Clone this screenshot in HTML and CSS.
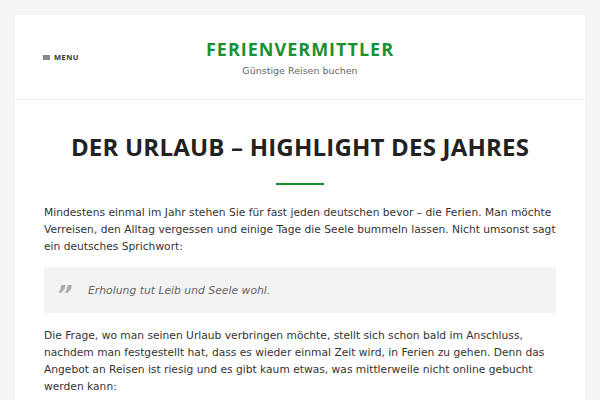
FILE: index.html
```html
<!DOCTYPE html>
<html lang="de">
<head>
<meta charset="utf-8">
<link rel="stylesheet" href="styles.css">
</head>
<body>
<div class="page">
  <header class="site-header">
    <div class="menu-toggle"><span class="burger"></span><span class="menu-label">MENU</span></div>
    <div class="branding">
      <div class="site-title">FERIENVERMITTLER</div>
      <div class="tagline">Günstige Reisen buchen</div>
    </div>
  </header>
  <main class="content">
    <h1 class="entry-title">DER URLAUB – HIGHLIGHT DES JAHRES</h1>
    <div class="title-rule"></div>
    <p>Mindestens einmal im Jahr stehen Sie für fast jeden deutschen bevor – die Ferien. Man möchte<br>Verreisen, den Alltag vergessen und einige Tage die Seele bummeln lassen. Nicht umsonst sagt<br>ein deutsches Sprichwort:</p>
    <blockquote class="quote"><span class="qmark">”</span><span class="qtext">Erholung tut Leib und Seele wohl.</span></blockquote>
    <p>Die Frage, wo man seinen Urlaub verbringen möchte, stellt sich schon bald im Anschluss,<br>nachdem man festgestellt hat, dass es wieder einmal Zeit wird, in Ferien zu gehen. Denn das<br>Angebot an Reisen ist riesig und es gibt kaum etwas, was mittlerweile nicht online gebucht<br>werden kann:</p>
  </main>
</div>
</body>
</html>
```

FILE: styles.css
```css
html, body {
  margin: 0;
  padding: 0;
  background: #f5f5f5;
  font-family: "DejaVu Sans", Verdana, sans-serif;
  color: #333;
}
.page {
  margin: 15px 15px 0 15px;
  background: #fff;
  height: 385px;
  overflow: hidden;
}
.site-header {
  position: relative;
  height: 84px;
  border-bottom: 1px solid #f0f0f0;
  display: flex;
  justify-content: center;
  align-items: center;
}
.menu-toggle {
  position: absolute;
  left: 28px;
  top: 37px;
  display: flex;
  align-items: center;
  gap: 4px;
}
.burger {
  display: block;
  width: 7px;
  height: 5px;
  background: #888;
}
.menu-label {
  font-family: "Open Sans", sans-serif;
  font-size: 7.5px;
  font-weight: bold;
  letter-spacing: 0.5px;
  color: #333;
}
.branding {
  text-align: center;
}
.site-title {
  font-family: "Open Sans", sans-serif;
  font-size: 18px;
  font-weight: bold;
  color: #1a9130;
  letter-spacing: 1px;
  line-height: 20px;
}
.tagline {
  font-size: 9.5px;
  color: #666;
  margin-top: 6px;
}
.content {
  padding: 0 29px;
}
.entry-title {
  font-family: "Open Sans", sans-serif;
  margin: 32px 0 0 0;
  text-align: center;
  font-size: 24px;
  font-weight: bold;
  letter-spacing: 0.2px;
  color: #222;
  line-height: 30px;
}
.title-rule {
  width: 48px;
  height: 2px;
  background: #1a9130;
  margin: 21px auto 0 auto;
}
.content p {
  font-size: 10.7px;
  line-height: 17px;
  margin: 19px -8px 0 0;
}
.quote {
  margin: 12px 0 0 0;
  background: #f3f3f3;
  height: 46px;
  display: flex;
  align-items: center;
  padding-left: 13px;
}
.qmark {
  font-size: 24px;
  font-style: italic;
  font-weight: bold;
  color: #aaa;
  width: 31px;
  line-height: 1;
  padding-top: 9px;
}
.qtext {
  font-size: 10.8px;
  font-style: italic;
  color: #666;
}
.quote + p {
  margin-top: 14px;
}
```
